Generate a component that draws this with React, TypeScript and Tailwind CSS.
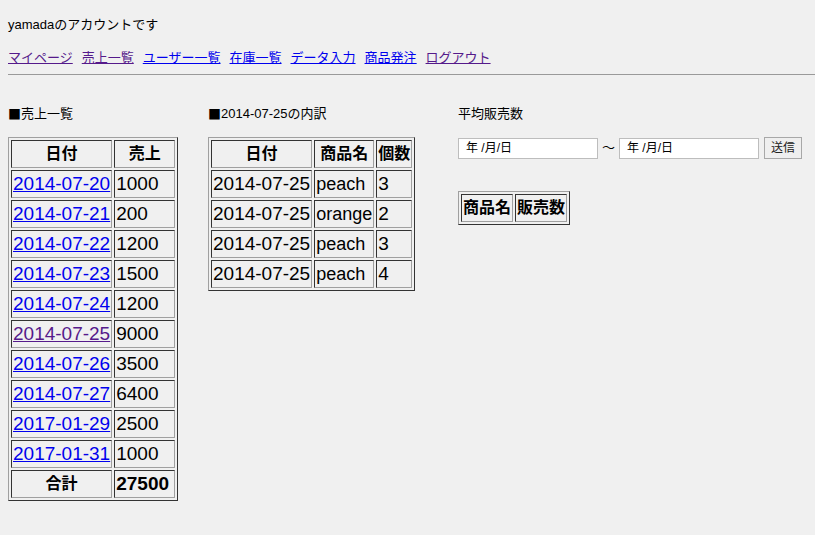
const sales = [
  { date: '2014-07-20', amount: 1000 },
  { date: '2014-07-21', amount: 200 },
  { date: '2014-07-22', amount: 1200 },
  { date: '2014-07-23', amount: 1500 },
  { date: '2014-07-24', amount: 1200 },
  { date: '2014-07-25', amount: 9000, visited: true },
  { date: '2014-07-26', amount: 3500 },
  { date: '2014-07-27', amount: 6400 },
  { date: '2017-01-29', amount: 2500 },
  { date: '2017-01-31', amount: 1000 },
]

const details = [
  { date: '2014-07-25', item: 'peach', count: 3 },
  { date: '2014-07-25', item: 'orange', count: 2 },
  { date: '2014-07-25', item: 'peach', count: 3 },
  { date: '2014-07-25', item: 'peach', count: 4 },
]

const nav = [
  { label: 'マイページ', visited: true },
  { label: '売上一覧', visited: true },
  { label: 'ユーザー一覧' },
  { label: '在庫一覧' },
  { label: 'データ入力' },
  { label: '商品発注' },
  { label: 'ログアウト', visited: true },
]

const table =
  'border-separate border-spacing-[2px] border border-t-[#a0a0a0] border-l-[#a0a0a0] border-r-[#333] border-b-[#333] text-[19px] leading-[24px] text-black'
const cell =
  'border border-t-[#333] border-l-[#333] border-r-[#a0a0a0] border-b-[#a0a0a0] p-px text-left font-normal whitespace-nowrap'
const head =
  'border border-t-[#333] border-l-[#333] border-r-[#a0a0a0] border-b-[#a0a0a0] p-px text-center font-bold text-[16px] whitespace-nowrap'

function DateBox() {
  return (
    <div className="flex h-[21px] w-[140px] items-center border border-[#bdbdbd] bg-white pl-[7px] text-[12px] text-black">
      年 /月/日
    </div>
  )
}

function Title({ children }: { children: React.ReactNode }) {
  return (
    <h2 className="flex items-center font-normal">
      <span className="text-[13px] [font-family:'Noto_Sans_CJK_JP',sans-serif]">■</span>
      {children}
    </h2>
  )
}

export default function App() {
  return (
    <div className="min-h-screen bg-[#f0f0f0] pl-2 pt-[17px] text-[13px] leading-[16px] text-black [font-family:'Liberation_Sans','Noto_Sans_CJK_JP',sans-serif]">
      <p>yamadaのアカウントです</p>

      <nav className="mt-[17px] flex gap-[9px]">
        {nav.map((n) => (
          <a
            key={n.label}
            href="#"
            className={`underline ${n.visited ? 'text-[#551a8b]' : 'text-[#0000ee]'}`}
          >
            {n.label}
          </a>
        ))}
      </nav>

      <div className="mt-2 h-px bg-[#9a9a9a]" />

      <div className="mt-[31px] flex items-start">
        <section className="w-[200px] shrink-0">
          <Title>売上一覧</Title>
          <table className={`mt-[15px] ${table}`}>
            <tbody>
              <tr>
                <th className={head}>日付</th>
                <th className={`${head} w-[61px]`}>売上</th>
              </tr>
              {sales.map((s) => (
                <tr key={s.date}>
                  <td className={cell}>
                    <a
                      href="#"
                      className={`underline ${s.visited ? 'text-[#551a8b]' : 'text-[#0000ee]'}`}
                    >
                      {s.date}
                    </a>
                  </td>
                  <td className={cell}>{s.amount}</td>
                </tr>
              ))}
              <tr>
                <th className={head}>合計</th>
                <th className={`${cell} !font-bold`}>27500</th>
              </tr>
            </tbody>
          </table>
        </section>

        <section className="w-[250px] shrink-0">
          <Title>2014-07-25の内訳</Title>
          <table className={`mt-[15px] ${table}`}>
            <tbody>
              <tr>
                <th className={head}>日付</th>
                <th className={head}>商品名</th>
                <th className={head}>個数</th>
              </tr>
              {details.map((d, i) => (
                <tr key={i}>
                  <td className={cell}>{d.date}</td>
                  <td className={`${cell} text-[18px]`}>{d.item}</td>
                  <td className={cell}>{d.count}</td>
                </tr>
              ))}
            </tbody>
          </table>
        </section>

        <section className="flex-1">
          <h2 className="font-normal">平均販売数</h2>
          <div className="mt-[15px] flex items-center">
            <DateBox />
            <span className="mx-[4px] text-[13px]">〜</span>
            <DateBox />
            <button className="ml-[5px] h-[22px] w-[38px] border border-[#a8a8a8] bg-[#efefef] text-[12px] text-[#222]">
              送信
            </button>
          </div>
          <table className={`mt-[32px] ${table}`}>
            <tbody>
              <tr>
                <th className={head}>商品名</th>
                <th className={head}>販売数</th>
              </tr>
            </tbody>
          </table>
        </section>
      </div>
    </div>
  )
}
